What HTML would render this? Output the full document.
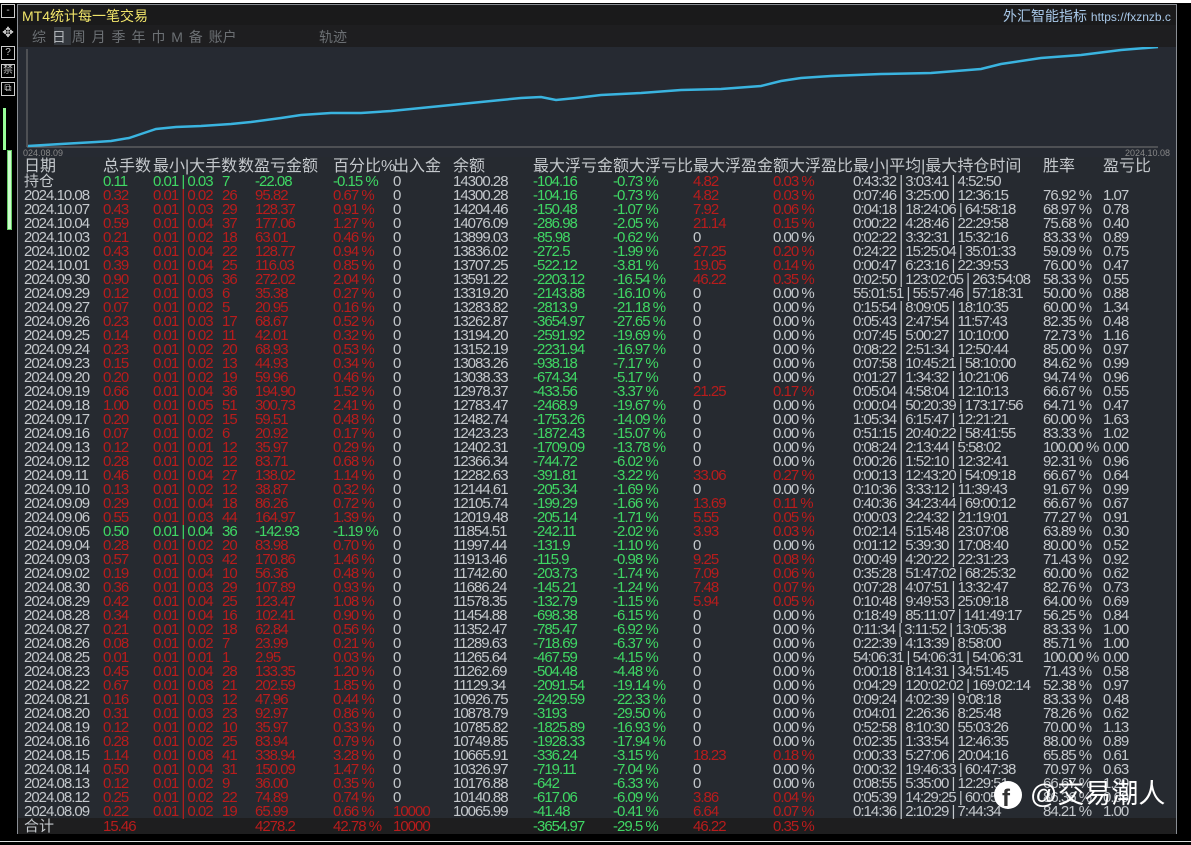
<!DOCTYPE html>
<html><head><meta charset="utf-8"><style>
*{margin:0;padding:0;box-sizing:border-box}
body{width:1191px;height:845px;background:#000;position:relative;overflow:hidden;font-family:"Liberation Sans","Noto Sans CJK SC",sans-serif;color:#c4c8cc}
#panel{position:absolute;left:17px;top:4px;width:1160px;height:830px;background:#262a30;border:1px solid #8a8e94}
#title{position:absolute;left:0;top:0;width:100%;height:20px;background:#1a1a1b}
#tabs{position:absolute;left:0;top:20px;width:100%;height:22px;background:#1e1e20}
#chart{position:absolute;left:0;top:42px;width:100%;height:110px;background:#262a32}
.t{position:absolute;white-space:nowrap}
.h{position:absolute;white-space:nowrap;top:159px;font-size:16px;line-height:16px}
.r{position:absolute;left:0;width:1191px;height:14px;font-size:15px;line-height:14px;letter-spacing:-1px}
.r span{position:absolute;white-space:nowrap}
.r span:nth-child(1){left:24px}.r span:nth-child(2){left:103px}.r span:nth-child(3){left:153px}.r span:nth-child(4){left:222px}.r span:nth-child(5){left:255px}.r span:nth-child(6){left:333px}.r span:nth-child(7){left:393px}.r span:nth-child(8){left:453px}.r span:nth-child(9){left:533px}.r span:nth-child(10){left:613px}.r span:nth-child(11){left:693px}.r span:nth-child(12){left:773px}.r span:nth-child(13){left:853px}.r span:nth-child(14){left:1043px}.r span:nth-child(15){left:1103px}
.g{color:#3fd864}.d{color:#b81c1c}
.ic{position:absolute;left:1px;width:14px;height:14px;border:1px solid #ccc;font-size:10px;text-align:center;color:#ccc;line-height:12px}
</style></head><body>
<div style="position:absolute;left:0;top:0;width:1191px;height:3px;background:#fff"></div>
<div style="position:absolute;left:0;top:841px;width:1191px;height:1px;background:#ddd"></div>
<div class="ic" style="top:4px">-</div>
<div class="ic" style="top:26px;border:none;font-size:14px">✥</div>
<div class="ic" style="top:46px">?</div>
<div class="ic" style="top:64px">禁</div>
<div class="ic" style="top:82px">⧉</div>
<div style="position:absolute;left:3px;top:108px;width:3px;height:42px;background:#9f9"></div>
<div style="position:absolute;left:7px;top:150px;width:5px;height:80px;background:#cfc;border:1px solid #6c6"></div>
<div id="panel">
 <div id="title"><div class="t" style="left:4px;top:1px;font-size:14px;color:#f0e46a">MT4统计每一笔交易</div>
 <div class="t" style="left:985px;top:1px;font-size:14px;color:#a8c8e8">外汇智能指标 <span style="font-size:12px">https://fxznzb.c</span></div></div>
 <div id="tabs"><div style="position:absolute;left:36px;top:2px;width:17px;height:18px;background:#34383e"></div>
 <div class="t" style="left:14px;top:2px;font-size:14px;color:#6c7074;word-spacing:2px">综 <span style="color:#b0b4b8">日</span> 周 月 季 年 巾 M 备 账户</div>
 <div class="t" style="left:301px;top:2px;font-size:14px;color:#6c7074">轨迹</div></div>
 <div id="chart">
 <svg width="1160" height="110" style="position:absolute;left:0;top:0">
 <line x1="9" y1="2" x2="9" y2="100" stroke="#777" stroke-width="1"/>
 <line x1="9" y1="100" x2="1140" y2="100" stroke="#777" stroke-width="1"/>
 <polyline fill="none" stroke="#3ab4e0" stroke-width="2.5" points="10,99 43,97 78,95 93,94 111,91 123,87 138,82 158,80 183,79 213,77 233,75 263,71 283,68 313,66 343,66 373,64 403,61 433,58 463,55 483,53 503,51 523,50 538,53 558,51 583,48 623,46 663,43 703,42 743,39 763,34 783,31 813,29 863,27 913,26 963,22 983,17 1023,11 1063,8 1103,3 1140,0"/>
 </svg>
 <div class="t" style="left:5px;top:101px;font-size:9px;color:#888">024.08.09</div>
 <div class="t" style="left:1107px;top:101px;font-size:9px;color:#888">2024.10.08</div>
 </div>
 <div style="position:absolute;left:0;top:813px;width:100%;height:16px;background:#1e1e1f"></div>
</div>
<div class="h" style="left:24px">日期</div>
<div class="h" style="left:103px">总手数</div>
<div class="h" style="left:153px">最小|大手数</div>
<div class="h" style="left:238px">数盈亏金额</div>
<div class="h" style="left:333px">百分比%</div>
<div class="h" style="left:393px">出入金</div>
<div class="h" style="left:453px">余额</div>
<div class="h" style="left:533px">最大浮亏金</div>
<div class="h" style="left:613px">额大浮亏比</div>
<div class="h" style="left:693px">最大浮盈金</div>
<div class="h" style="left:773px">额大浮盈比</div>
<div class="h" style="left:853px">最小|平均|最大持仓时间</div>
<div class="h" style="left:1043px">胜率</div>
<div class="h" style="left:1103px">盈亏比</div>
<div class="r" style="top:175px"><span style="letter-spacing:0">持仓</span><span class="g">0.11</span><span class="g">0.01 | 0.03</span><span class="g">7</span><span class="g">-22.08</span><span class="g">-0.15 %</span><span>0</span><span>14300.28</span><span class="g">-104.16</span><span class="g">-0.73 %</span><span class="d">4.82</span><span class="d">0.03 %</span><span>0:43:32 | 3:03:41 | 4:52:50</span><span></span><span></span></div>
<div class="r" style="top:189px"><span>2024.10.08</span><span class="d">0.32</span><span class="d">0.01 | 0.02</span><span class="d">26</span><span class="d">95.82</span><span class="d">0.67 %</span><span>0</span><span>14300.28</span><span class="g">-104.16</span><span class="g">-0.73 %</span><span class="d">4.82</span><span class="d">0.03 %</span><span>0:07:46 | 3:25:00 | 12:36:15</span><span>76.92 %</span><span>1.07</span></div>
<div class="r" style="top:203px"><span>2024.10.07</span><span class="d">0.43</span><span class="d">0.01 | 0.03</span><span class="d">29</span><span class="d">128.37</span><span class="d">0.91 %</span><span>0</span><span>14204.46</span><span class="g">-150.48</span><span class="g">-1.07 %</span><span class="d">7.92</span><span class="d">0.06 %</span><span>0:04:18 | 18:24:06 | 64:58:18</span><span>68.97 %</span><span>0.78</span></div>
<div class="r" style="top:217px"><span>2024.10.04</span><span class="d">0.59</span><span class="d">0.01 | 0.04</span><span class="d">37</span><span class="d">177.06</span><span class="d">1.27 %</span><span>0</span><span>14076.09</span><span class="g">-286.98</span><span class="g">-2.05 %</span><span class="d">21.14</span><span class="d">0.15 %</span><span>0:00:22 | 4:28:46 | 22:29:58</span><span>75.68 %</span><span>0.40</span></div>
<div class="r" style="top:231px"><span>2024.10.03</span><span class="d">0.21</span><span class="d">0.01 | 0.02</span><span class="d">18</span><span class="d">63.01</span><span class="d">0.46 %</span><span>0</span><span>13899.03</span><span class="g">-85.98</span><span class="g">-0.62 %</span><span>0</span><span>0.00 %</span><span>0:02:22 | 3:32:31 | 15:32:16</span><span>83.33 %</span><span>0.89</span></div>
<div class="r" style="top:245px"><span>2024.10.02</span><span class="d">0.43</span><span class="d">0.01 | 0.04</span><span class="d">22</span><span class="d">128.77</span><span class="d">0.94 %</span><span>0</span><span>13836.02</span><span class="g">-272.5</span><span class="g">-1.99 %</span><span class="d">27.25</span><span class="d">0.20 %</span><span>0:24:22 | 15:25:04 | 35:01:33</span><span>59.09 %</span><span>0.75</span></div>
<div class="r" style="top:259px"><span>2024.10.01</span><span class="d">0.39</span><span class="d">0.01 | 0.04</span><span class="d">25</span><span class="d">116.03</span><span class="d">0.85 %</span><span>0</span><span>13707.25</span><span class="g">-522.12</span><span class="g">-3.81 %</span><span class="d">19.05</span><span class="d">0.14 %</span><span>0:00:47 | 6:23:16 | 22:39:53</span><span>76.00 %</span><span>0.47</span></div>
<div class="r" style="top:273px"><span>2024.09.30</span><span class="d">0.90</span><span class="d">0.01 | 0.06</span><span class="d">36</span><span class="d">272.02</span><span class="d">2.04 %</span><span>0</span><span>13591.22</span><span class="g">-2203.12</span><span class="g">-16.54 %</span><span class="d">46.22</span><span class="d">0.35 %</span><span>0:02:50 | 123:02:05 | 263:54:08</span><span>58.33 %</span><span>0.55</span></div>
<div class="r" style="top:287px"><span>2024.09.29</span><span class="d">0.12</span><span class="d">0.01 | 0.03</span><span class="d">6</span><span class="d">35.38</span><span class="d">0.27 %</span><span>0</span><span>13319.20</span><span class="g">-2143.88</span><span class="g">-16.10 %</span><span>0</span><span>0.00 %</span><span>55:01:51 | 55:57:46 | 57:18:31</span><span>50.00 %</span><span>0.88</span></div>
<div class="r" style="top:301px"><span>2024.09.27</span><span class="d">0.07</span><span class="d">0.01 | 0.02</span><span class="d">5</span><span class="d">20.95</span><span class="d">0.16 %</span><span>0</span><span>13283.82</span><span class="g">-2813.9</span><span class="g">-21.18 %</span><span>0</span><span>0.00 %</span><span>0:15:54 | 8:09:05 | 18:10:35</span><span>60.00 %</span><span>1.34</span></div>
<div class="r" style="top:315px"><span>2024.09.26</span><span class="d">0.23</span><span class="d">0.01 | 0.03</span><span class="d">17</span><span class="d">68.67</span><span class="d">0.52 %</span><span>0</span><span>13262.87</span><span class="g">-3654.97</span><span class="g">-27.65 %</span><span>0</span><span>0.00 %</span><span>0:05:43 | 2:47:54 | 11:57:43</span><span>82.35 %</span><span>0.48</span></div>
<div class="r" style="top:329px"><span>2024.09.25</span><span class="d">0.14</span><span class="d">0.01 | 0.02</span><span class="d">11</span><span class="d">42.01</span><span class="d">0.32 %</span><span>0</span><span>13194.20</span><span class="g">-2591.92</span><span class="g">-19.69 %</span><span>0</span><span>0.00 %</span><span>0:07:45 | 5:00:27 | 10:10:00</span><span>72.73 %</span><span>1.16</span></div>
<div class="r" style="top:343px"><span>2024.09.24</span><span class="d">0.23</span><span class="d">0.01 | 0.02</span><span class="d">20</span><span class="d">68.93</span><span class="d">0.53 %</span><span>0</span><span>13152.19</span><span class="g">-2231.94</span><span class="g">-16.97 %</span><span>0</span><span>0.00 %</span><span>0:08:22 | 2:51:34 | 12:50:44</span><span>85.00 %</span><span>0.97</span></div>
<div class="r" style="top:357px"><span>2024.09.23</span><span class="d">0.15</span><span class="d">0.01 | 0.02</span><span class="d">13</span><span class="d">44.93</span><span class="d">0.34 %</span><span>0</span><span>13083.26</span><span class="g">-938.18</span><span class="g">-7.17 %</span><span>0</span><span>0.00 %</span><span>0:07:58 | 10:45:21 | 58:10:00</span><span>84.62 %</span><span>0.99</span></div>
<div class="r" style="top:371px"><span>2024.09.20</span><span class="d">0.20</span><span class="d">0.01 | 0.02</span><span class="d">19</span><span class="d">59.96</span><span class="d">0.46 %</span><span>0</span><span>13038.33</span><span class="g">-674.34</span><span class="g">-5.17 %</span><span>0</span><span>0.00 %</span><span>0:01:27 | 1:34:32 | 10:21:06</span><span>94.74 %</span><span>0.96</span></div>
<div class="r" style="top:385px"><span>2024.09.19</span><span class="d">0.66</span><span class="d">0.01 | 0.04</span><span class="d">36</span><span class="d">194.90</span><span class="d">1.52 %</span><span>0</span><span>12978.37</span><span class="g">-433.56</span><span class="g">-3.37 %</span><span class="d">21.25</span><span class="d">0.17 %</span><span>0:05:04 | 4:58:04 | 12:10:13</span><span>66.67 %</span><span>0.55</span></div>
<div class="r" style="top:399px"><span>2024.09.18</span><span class="d">1.00</span><span class="d">0.01 | 0.05</span><span class="d">51</span><span class="d">300.73</span><span class="d">2.41 %</span><span>0</span><span>12783.47</span><span class="g">-2468.9</span><span class="g">-19.67 %</span><span>0</span><span>0.00 %</span><span>0:00:04 | 50:20:39 | 173:17:56</span><span>64.71 %</span><span>0.47</span></div>
<div class="r" style="top:413px"><span>2024.09.17</span><span class="d">0.20</span><span class="d">0.01 | 0.02</span><span class="d">15</span><span class="d">59.51</span><span class="d">0.48 %</span><span>0</span><span>12482.74</span><span class="g">-1753.26</span><span class="g">-14.09 %</span><span>0</span><span>0.00 %</span><span>1:05:34 | 6:15:47 | 12:21:21</span><span>60.00 %</span><span>1.63</span></div>
<div class="r" style="top:427px"><span>2024.09.16</span><span class="d">0.07</span><span class="d">0.01 | 0.02</span><span class="d">6</span><span class="d">20.92</span><span class="d">0.17 %</span><span>0</span><span>12423.23</span><span class="g">-1872.43</span><span class="g">-15.07 %</span><span>0</span><span>0.00 %</span><span>0:51:15 | 20:40:22 | 58:41:55</span><span>83.33 %</span><span>1.02</span></div>
<div class="r" style="top:441px"><span>2024.09.13</span><span class="d">0.12</span><span class="d">0.01 | 0.01</span><span class="d">12</span><span class="d">35.97</span><span class="d">0.29 %</span><span>0</span><span>12402.31</span><span class="g">-1709.09</span><span class="g">-13.78 %</span><span>0</span><span>0.00 %</span><span>0:08:24 | 2:13:44 | 5:58:02</span><span>100.00 %</span><span>0.00</span></div>
<div class="r" style="top:455px"><span>2024.09.12</span><span class="d">0.28</span><span class="d">0.01 | 0.02</span><span class="d">12</span><span class="d">83.71</span><span class="d">0.68 %</span><span>0</span><span>12366.34</span><span class="g">-744.72</span><span class="g">-6.02 %</span><span>0</span><span>0.00 %</span><span>0:00:26 | 1:52:10 | 12:32:41</span><span>92.31 %</span><span>0.96</span></div>
<div class="r" style="top:469px"><span>2024.09.11</span><span class="d">0.46</span><span class="d">0.01 | 0.04</span><span class="d">27</span><span class="d">138.02</span><span class="d">1.14 %</span><span>0</span><span>12282.63</span><span class="g">-391.81</span><span class="g">-3.22 %</span><span class="d">33.06</span><span class="d">0.27 %</span><span>0:00:13 | 12:43:20 | 54:09:18</span><span>66.67 %</span><span>0.64</span></div>
<div class="r" style="top:483px"><span>2024.09.10</span><span class="d">0.13</span><span class="d">0.01 | 0.02</span><span class="d">12</span><span class="d">38.87</span><span class="d">0.32 %</span><span>0</span><span>12144.61</span><span class="g">-205.34</span><span class="g">-1.69 %</span><span>0</span><span>0.00 %</span><span>0:10:36 | 3:33:12 | 11:39:43</span><span>91.67 %</span><span>0.99</span></div>
<div class="r" style="top:497px"><span>2024.09.09</span><span class="d">0.29</span><span class="d">0.01 | 0.04</span><span class="d">18</span><span class="d">86.26</span><span class="d">0.72 %</span><span>0</span><span>12105.74</span><span class="g">-199.29</span><span class="g">-1.66 %</span><span class="d">13.69</span><span class="d">0.11 %</span><span>0:40:36 | 34:23:44 | 69:00:12</span><span>66.67 %</span><span>0.67</span></div>
<div class="r" style="top:511px"><span>2024.09.06</span><span class="d">0.55</span><span class="d">0.01 | 0.03</span><span class="d">44</span><span class="d">164.97</span><span class="d">1.39 %</span><span>0</span><span>12019.48</span><span class="g">-205.14</span><span class="g">-1.71 %</span><span class="d">5.55</span><span class="d">0.05 %</span><span>0:00:03 | 2:24:32 | 21:19:01</span><span>77.27 %</span><span>0.91</span></div>
<div class="r" style="top:525px"><span>2024.09.05</span><span class="g">0.50</span><span class="g">0.01 | 0.04</span><span class="g">36</span><span class="g">-142.93</span><span class="g">-1.19 %</span><span>0</span><span>11854.51</span><span class="g">-242.11</span><span class="g">-2.02 %</span><span class="d">3.93</span><span class="d">0.03 %</span><span>0:02:14 | 5:15:48 | 23:07:08</span><span>63.89 %</span><span>0.30</span></div>
<div class="r" style="top:539px"><span>2024.09.04</span><span class="d">0.28</span><span class="d">0.01 | 0.02</span><span class="d">20</span><span class="d">83.98</span><span class="d">0.70 %</span><span>0</span><span>11997.44</span><span class="g">-131.9</span><span class="g">-1.10 %</span><span>0</span><span>0.00 %</span><span>0:01:12 | 5:39:30 | 17:08:40</span><span>80.00 %</span><span>0.52</span></div>
<div class="r" style="top:553px"><span>2024.09.03</span><span class="d">0.57</span><span class="d">0.01 | 0.03</span><span class="d">42</span><span class="d">170.86</span><span class="d">1.46 %</span><span>0</span><span>11913.46</span><span class="g">-115.9</span><span class="g">-0.98 %</span><span class="d">9.25</span><span class="d">0.08 %</span><span>0:00:49 | 4:20:22 | 22:31:23</span><span>71.43 %</span><span>0.92</span></div>
<div class="r" style="top:567px"><span>2024.09.02</span><span class="d">0.19</span><span class="d">0.01 | 0.04</span><span class="d">10</span><span class="d">56.36</span><span class="d">0.48 %</span><span>0</span><span>11742.60</span><span class="g">-203.73</span><span class="g">-1.74 %</span><span class="d">7.09</span><span class="d">0.06 %</span><span>0:35:28 | 51:47:02 | 68:25:32</span><span>60.00 %</span><span>0.62</span></div>
<div class="r" style="top:581px"><span>2024.08.30</span><span class="d">0.36</span><span class="d">0.01 | 0.03</span><span class="d">29</span><span class="d">107.89</span><span class="d">0.93 %</span><span>0</span><span>11686.24</span><span class="g">-145.21</span><span class="g">-1.24 %</span><span class="d">7.48</span><span class="d">0.07 %</span><span>0:07:28 | 4:07:51 | 13:32:47</span><span>82.76 %</span><span>0.73</span></div>
<div class="r" style="top:595px"><span>2024.08.29</span><span class="d">0.42</span><span class="d">0.01 | 0.04</span><span class="d">25</span><span class="d">123.47</span><span class="d">1.08 %</span><span>0</span><span>11578.35</span><span class="g">-132.79</span><span class="g">-1.15 %</span><span class="d">5.94</span><span class="d">0.05 %</span><span>0:10:48 | 9:49:53 | 25:09:18</span><span>64.00 %</span><span>0.69</span></div>
<div class="r" style="top:609px"><span>2024.08.28</span><span class="d">0.34</span><span class="d">0.01 | 0.04</span><span class="d">16</span><span class="d">102.41</span><span class="d">0.90 %</span><span>0</span><span>11454.88</span><span class="g">-698.38</span><span class="g">-6.15 %</span><span>0</span><span>0.00 %</span><span>0:18:49 | 85:11:07 | 141:49:17</span><span>56.25 %</span><span>0.84</span></div>
<div class="r" style="top:623px"><span>2024.08.27</span><span class="d">0.21</span><span class="d">0.01 | 0.02</span><span class="d">18</span><span class="d">62.84</span><span class="d">0.56 %</span><span>0</span><span>11352.47</span><span class="g">-785.47</span><span class="g">-6.92 %</span><span>0</span><span>0.00 %</span><span>0:11:34 | 3:11:52 | 13:05:38</span><span>83.33 %</span><span>1.00</span></div>
<div class="r" style="top:637px"><span>2024.08.26</span><span class="d">0.08</span><span class="d">0.01 | 0.02</span><span class="d">7</span><span class="d">23.99</span><span class="d">0.21 %</span><span>0</span><span>11289.63</span><span class="g">-718.69</span><span class="g">-6.37 %</span><span>0</span><span>0.00 %</span><span>0:22:39 | 4:13:39 | 8:58:00</span><span>85.71 %</span><span>1.00</span></div>
<div class="r" style="top:651px"><span>2024.08.25</span><span class="d">0.01</span><span class="d">0.01 | 0.01</span><span class="d">1</span><span class="d">2.95</span><span class="d">0.03 %</span><span>0</span><span>11265.64</span><span class="g">-467.59</span><span class="g">-4.15 %</span><span>0</span><span>0.00 %</span><span>54:06:31 | 54:06:31 | 54:06:31</span><span>100.00 %</span><span>0.00</span></div>
<div class="r" style="top:665px"><span>2024.08.23</span><span class="d">0.45</span><span class="d">0.01 | 0.04</span><span class="d">28</span><span class="d">133.35</span><span class="d">1.20 %</span><span>0</span><span>11262.69</span><span class="g">-504.48</span><span class="g">-4.48 %</span><span>0</span><span>0.00 %</span><span>0:00:18 | 8:14:31 | 34:51:45</span><span>71.43 %</span><span>0.58</span></div>
<div class="r" style="top:679px"><span>2024.08.22</span><span class="d">0.67</span><span class="d">0.01 | 0.08</span><span class="d">21</span><span class="d">202.59</span><span class="d">1.85 %</span><span>0</span><span>11129.34</span><span class="g">-2091.54</span><span class="g">-19.14 %</span><span>0</span><span>0.00 %</span><span>0:04:29 | 120:02:02 | 169:02:14</span><span>52.38 %</span><span>0.97</span></div>
<div class="r" style="top:693px"><span>2024.08.21</span><span class="d">0.16</span><span class="d">0.01 | 0.03</span><span class="d">12</span><span class="d">47.96</span><span class="d">0.44 %</span><span>0</span><span>10926.75</span><span class="g">-2429.59</span><span class="g">-22.33 %</span><span>0</span><span>0.00 %</span><span>0:09:24 | 4:02:39 | 9:08:18</span><span>83.33 %</span><span>0.48</span></div>
<div class="r" style="top:707px"><span>2024.08.20</span><span class="d">0.31</span><span class="d">0.01 | 0.03</span><span class="d">23</span><span class="d">92.97</span><span class="d">0.86 %</span><span>0</span><span>10878.79</span><span class="g">-3193</span><span class="g">-29.50 %</span><span>0</span><span>0.00 %</span><span>0:04:01 | 2:26:36 | 8:25:48</span><span>78.26 %</span><span>0.62</span></div>
<div class="r" style="top:721px"><span>2024.08.19</span><span class="d">0.12</span><span class="d">0.01 | 0.02</span><span class="d">10</span><span class="d">35.97</span><span class="d">0.33 %</span><span>0</span><span>10785.82</span><span class="g">-1825.89</span><span class="g">-16.93 %</span><span>0</span><span>0.00 %</span><span>0:52:58 | 8:10:30 | 55:03:26</span><span>70.00 %</span><span>1.13</span></div>
<div class="r" style="top:735px"><span>2024.08.16</span><span class="d">0.28</span><span class="d">0.01 | 0.02</span><span class="d">25</span><span class="d">83.94</span><span class="d">0.79 %</span><span>0</span><span>10749.85</span><span class="g">-1928.33</span><span class="g">-17.94 %</span><span>0</span><span>0.00 %</span><span>0:02:35 | 1:33:54 | 12:46:35</span><span>88.00 %</span><span>0.89</span></div>
<div class="r" style="top:749px"><span>2024.08.15</span><span class="d">1.14</span><span class="d">0.01 | 0.08</span><span class="d">41</span><span class="d">338.94</span><span class="d">3.28 %</span><span>0</span><span>10665.91</span><span class="g">-336.24</span><span class="g">-3.15 %</span><span class="d">18.23</span><span class="d">0.18 %</span><span>0:00:33 | 5:27:06 | 20:04:16</span><span>65.85 %</span><span>0.61</span></div>
<div class="r" style="top:763px"><span>2024.08.14</span><span class="d">0.50</span><span class="d">0.01 | 0.04</span><span class="d">31</span><span class="d">150.09</span><span class="d">1.47 %</span><span>0</span><span>10326.97</span><span class="g">-719.11</span><span class="g">-7.04 %</span><span>0</span><span>0.00 %</span><span>0:00:32 | 19:46:33 | 60:47:38</span><span>70.97 %</span><span>0.63</span></div>
<div class="r" style="top:777px"><span>2024.08.13</span><span class="d">0.12</span><span class="d">0.01 | 0.02</span><span class="d">9</span><span class="d">36.00</span><span class="d">0.35 %</span><span>0</span><span>10176.88</span><span class="g">-642</span><span class="g">-6.33 %</span><span>0</span><span>0.00 %</span><span>0:08:55 | 5:35:00 | 12:29:51</span><span>66.67 %</span><span>1.20</span></div>
<div class="r" style="top:791px"><span>2024.08.12</span><span class="d">0.25</span><span class="d">0.01 | 0.02</span><span class="d">22</span><span class="d">74.89</span><span class="d">0.74 %</span><span>0</span><span>10140.88</span><span class="g">-617.06</span><span class="g">-6.09 %</span><span class="d">3.86</span><span class="d">0.04 %</span><span>0:05:39 | 14:29:25 | 60:05:15</span><span>86.36 %</span><span>0.69</span></div>
<div class="r" style="top:805px"><span>2024.08.09</span><span class="d">0.22</span><span class="d">0.01 | 0.02</span><span class="d">19</span><span class="d">65.99</span><span class="d">0.66 %</span><span class="d">10000</span><span>10065.99</span><span class="g">-41.48</span><span class="g">-0.41 %</span><span class="d">6.64</span><span class="d">0.07 %</span><span>0:14:36 | 2:10:29 | 7:44:34</span><span>84.21 %</span><span>1.00</span></div>
<div class="r" style="top:820px"><span style="letter-spacing:0">合计</span><span class="d">15.46</span><span></span><span></span><span class="d">4278.2</span><span class="d">42.78 %</span><span class="d">10000</span><span></span><span class="g">-3654.97</span><span class="g">-29.5 %</span><span class="d">46.22</span><span class="d">0.35 %</span><span></span><span></span><span></span></div>
<svg width="30" height="30" style="position:absolute;left:993px;top:780px"><circle cx="15" cy="15" r="14" fill="#fff"/><text x="9" y="26" font-size="24" font-weight="bold" fill="#333" font-family="Liberation Sans">f</text></svg>
<div class="t" style="left:1030px;top:778px;font-size:27px;color:#fff;line-height:32px">@交易潮人</div>
</body></html>
